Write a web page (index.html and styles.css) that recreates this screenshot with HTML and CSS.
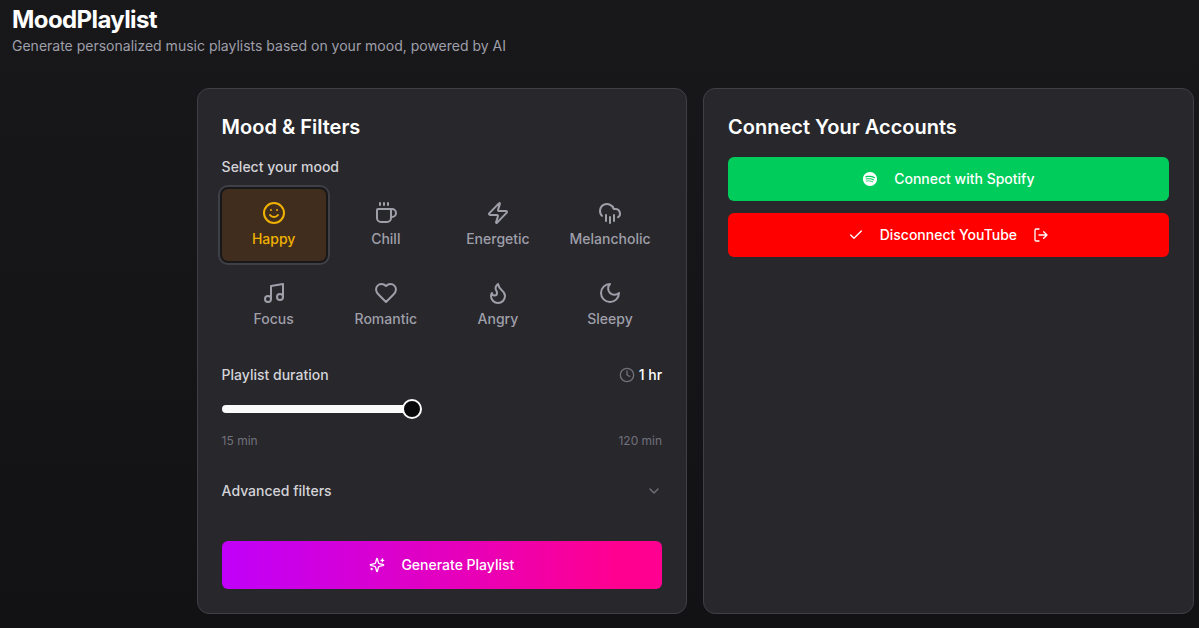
FILE: index.html
```
<!DOCTYPE html>
<html lang="en">
<head>
<meta charset="utf-8">
<title>MoodPlaylist</title>
<link rel="stylesheet" href="styles.css">
</head>
<body class="page">
<header class="header">
  <h1 class="brand">MoodPlaylist</h1>
  <p class="tagline">Generate personalized music playlists based on your mood, powered by AI</p>
</header>
<main class="panels">
  <section class="card">
    <h2 class="card-title">Mood &amp; Filters</h2>
    <div class="label">Select your mood</div>
    <div class="moods">
      <button class="mood mood-active"><svg class="icon icon-lg" viewBox="0 0 24 24"><circle cx="12" cy="12" r="10"/><path d="M8 14s1.5 2 4 2 4-2 4-2M9 9h.01M15 9h.01"/></svg>Happy</button>
      <button class="mood"><svg class="icon icon-lg" viewBox="0 0 24 24"><path d="M10 2v2M14 2v2M6 2v2M16 8a1 1 0 0 1 1 1v8a4 4 0 0 1-4 4H7a4 4 0 0 1-4-4V9a1 1 0 0 1 1-1h14a4 4 0 1 1 0 8h-1"/></svg>Chill</button>
      <button class="mood"><svg class="icon icon-lg" viewBox="0 0 24 24"><path d="M4 14a1 1 0 0 1-.78-1.63l9.9-10.2a.5.5 0 0 1 .86.46l-1.92 6.02A1 1 0 0 0 13 10h7a1 1 0 0 1 .78 1.63l-9.9 10.2a.5.5 0 0 1-.86-.46l1.92-6.02A1 1 0 0 0 11 14z"/></svg>Energetic</button>
      <button class="mood"><svg class="icon icon-lg" viewBox="0 0 24 24"><path d="M4 14.899A7 7 0 1 1 15.71 8h1.79a4.5 4.5 0 0 1 2.5 8.242M16 14v6M8 14v6M12 16v6"/></svg>Melancholic</button>
      <button class="mood"><svg class="icon icon-lg" viewBox="0 0 24 24"><path d="M9 18V5l12-2v13"/><circle cx="6" cy="18" r="3"/><circle cx="18" cy="16" r="3"/></svg>Focus</button>
      <button class="mood"><svg class="icon icon-lg" viewBox="0 0 24 24"><path d="M19 14c1.49-1.46 3-3.21 3-5.5A5.5 5.5 0 0 0 16.5 3c-1.76 0-3 .5-4.5 2-1.5-1.5-2.74-2-4.5-2A5.5 5.5 0 0 0 2 8.5c0 2.3 1.5 4.05 3 5.5l7 7Z"/></svg>Romantic</button>
      <button class="mood"><svg class="icon icon-lg" viewBox="0 0 24 24"><path d="M8.5 14.5A2.5 2.5 0 0 0 11 12c0-1.38-.5-2-1-3-1.072-2.143-.224-4.054 2-6 .5 2.5 2 4.9 4 6.5 2 1.6 3 3.5 3 5.5a7 7 0 1 1-14 0c0-1.153.433-2.294 1-3a2.5 2.5 0 0 0 2.5 2.5z"/></svg>Angry</button>
      <button class="mood"><svg class="icon icon-lg" viewBox="0 0 24 24"><path d="M12 3a6 6 0 0 0 9 9 9 9 0 1 1-9-9Z"/></svg>Sleepy</button>
    </div>
    <div class="duration-head">
      <span class="label">Playlist duration</span>
      <span class="duration"><svg class="icon icon-muted" viewBox="0 0 24 24"><circle cx="12" cy="12" r="10"/><path d="M12 6v6l4 2"/></svg>1 hr</span>
    </div>
    <div class="slider"><div class="slider-fill"></div><div class="slider-thumb"></div></div>
    <div class="range"><span>15 min</span><span>120 min</span></div>
    <div class="advanced"><span class="label">Advanced filters</span><svg class="icon icon-muted" viewBox="0 0 24 24"><path d="m6 9 6 6 6-6"/></svg></div>
    <button class="action action-generate"><svg class="icon" viewBox="0 0 24 24"><path d="M9.937 15.5A2 2 0 0 0 8.5 14.063l-6.135-1.582a.5.5 0 0 1 0-.962L8.5 9.936A2 2 0 0 0 9.937 8.5l1.582-6.135a.5.5 0 0 1 .963 0L14.063 8.5A2 2 0 0 0 15.5 9.937l6.135 1.581a.5.5 0 0 1 0 .964L15.5 14.063a2 2 0 0 0-1.437 1.437l-1.582 6.135a.5.5 0 0 1-.963 0zM20 3v4M22 5h-4M4 17v2M5 18H3"/></svg>Generate Playlist</button>
  </section>
  <section class="card">
    <h2 class="card-title">Connect Your Accounts</h2>
    <div class="accounts">
      <button class="action action-spotify"><svg class="icon-spotify" viewBox="-1.7 -1.7 27.4 27.4"><path d="M12 0C5.4 0 0 5.4 0 12s5.4 12 12 12 12-5.4 12-12S18.66 0 12 0zm5.521 17.34c-.24.359-.66.48-1.021.24-2.82-1.74-6.36-2.101-10.561-1.141-.418.122-.779-.179-.899-.539-.12-.421.18-.78.54-.9 4.56-1.021 8.52-.6 11.64 1.32.42.18.479.659.301 1.02zm1.44-3.3c-.301.42-.841.6-1.262.3-3.239-1.98-8.159-2.58-11.939-1.38-.479.12-1.02-.12-1.14-.6-.12-.48.12-1.021.6-1.141C9.6 9.9 15 10.561 18.72 12.84c.361.181.54.78.241 1.2zm.12-3.36C15.24 8.4 8.82 8.16 5.16 9.301c-.6.179-1.2-.181-1.38-.721-.18-.601.18-1.2.72-1.381 4.26-1.26 11.28-1.02 15.721 1.621.539.3.719 1.02.419 1.56-.299.421-1.02.599-1.559.3z"/></svg>Connect with Spotify</button>
      <button class="action action-youtube"><svg class="icon" viewBox="0 0 24 24"><path d="M20 6 9 17l-5-5"/></svg>Disconnect YouTube<svg class="icon" viewBox="0 0 24 24"><path d="M9 21H5a2 2 0 0 1-2-2V5a2 2 0 0 1 2-2h4M16 17l5-5-5-5M21 12H9"/></svg></button>
    </div>
  </section>
</main>
</body>
</html>
```
FILE: styles.css
```
* { box-sizing: border-box; margin: 0; }
.page { height: 628px; overflow: hidden; font: 14px/20px Inter, sans-serif; color: #fff; background: linear-gradient(#18181b, #121214); }
.header { height: 88px; padding: 4px 12px 0; }
.brand { font-size: 24px; line-height: 32px; font-weight: 700; letter-spacing: -0.6px; }
.tagline { color: #9f9fa9; }
.panels { display: grid; grid-template-columns: 1fr 1fr; gap: 16px; height: 526px; margin: 0 5.4px 0 196.6px; }
.card { display: flex; flex-direction: column; padding: 24px; border: 1px solid #3f3f46; border-radius: 12px; background: #28272c; }
.card-title { margin-bottom: 16px; font-size: 20px; line-height: 28px; font-weight: 600; }
.label { font-weight: 500; color: #d4d4d8; }
.moods { display: grid; grid-template-columns: repeat(4, 1fr); gap: 8px; margin: 12px 0 24px; }
.mood { display: flex; flex-direction: column; align-items: center; gap: 4px; height: 72px; padding: 12px 0; border: 0; border-radius: 6px; background: none; color: #9f9fa9; font: 500 14px/20px Inter, sans-serif; }
.mood-active { color: #f0b100; background: #402d1e; box-shadow: 0 0 0 2px #18181b, 0 0 0 4px #3f3f46; }
.icon { width: 16px; height: 16px; flex: none; fill: none; stroke: currentColor; stroke-width: 2; stroke-linecap: round; stroke-linejoin: round; }
.icon-lg { width: 24px; height: 24px; }
.icon-muted { color: #71717b; }
.duration-head, .range, .advanced { display: flex; justify-content: space-between; align-items: center; }
.duration { display: flex; align-items: center; gap: 4px; font-weight: 500; }
.slider { display: flex; align-items: center; height: 20px; margin: 14px 0; }
.slider-fill { width: 182px; height: 8px; border-radius: 4px 0 0 4px; background: #fafafa; }
.slider-thumb { width: 20px; height: 20px; margin-left: -2px; border: 2px solid #fafafa; border-radius: 50%; background: #09090b; }
.range { font-size: 12px; line-height: 16px; color: #71717b; }
.advanced { margin: 32px 0 40px; }
.action { display: flex; align-items: center; justify-content: center; gap: 16px; width: 100%; height: 44px; border: 0; border-radius: 6px; color: #fff; font: 500 14px/20px Inter, sans-serif; }
.action-generate { height: 48px; background: linear-gradient(90deg, #c000fa, #ff0090 90%); }
.accounts { display: grid; gap: 12px; }
.action-spotify { background: #00cc5b; }
.action-youtube { background: #ff0000; }
.icon-spotify { width: 16px; height: 16px; fill: #fff; }
```
